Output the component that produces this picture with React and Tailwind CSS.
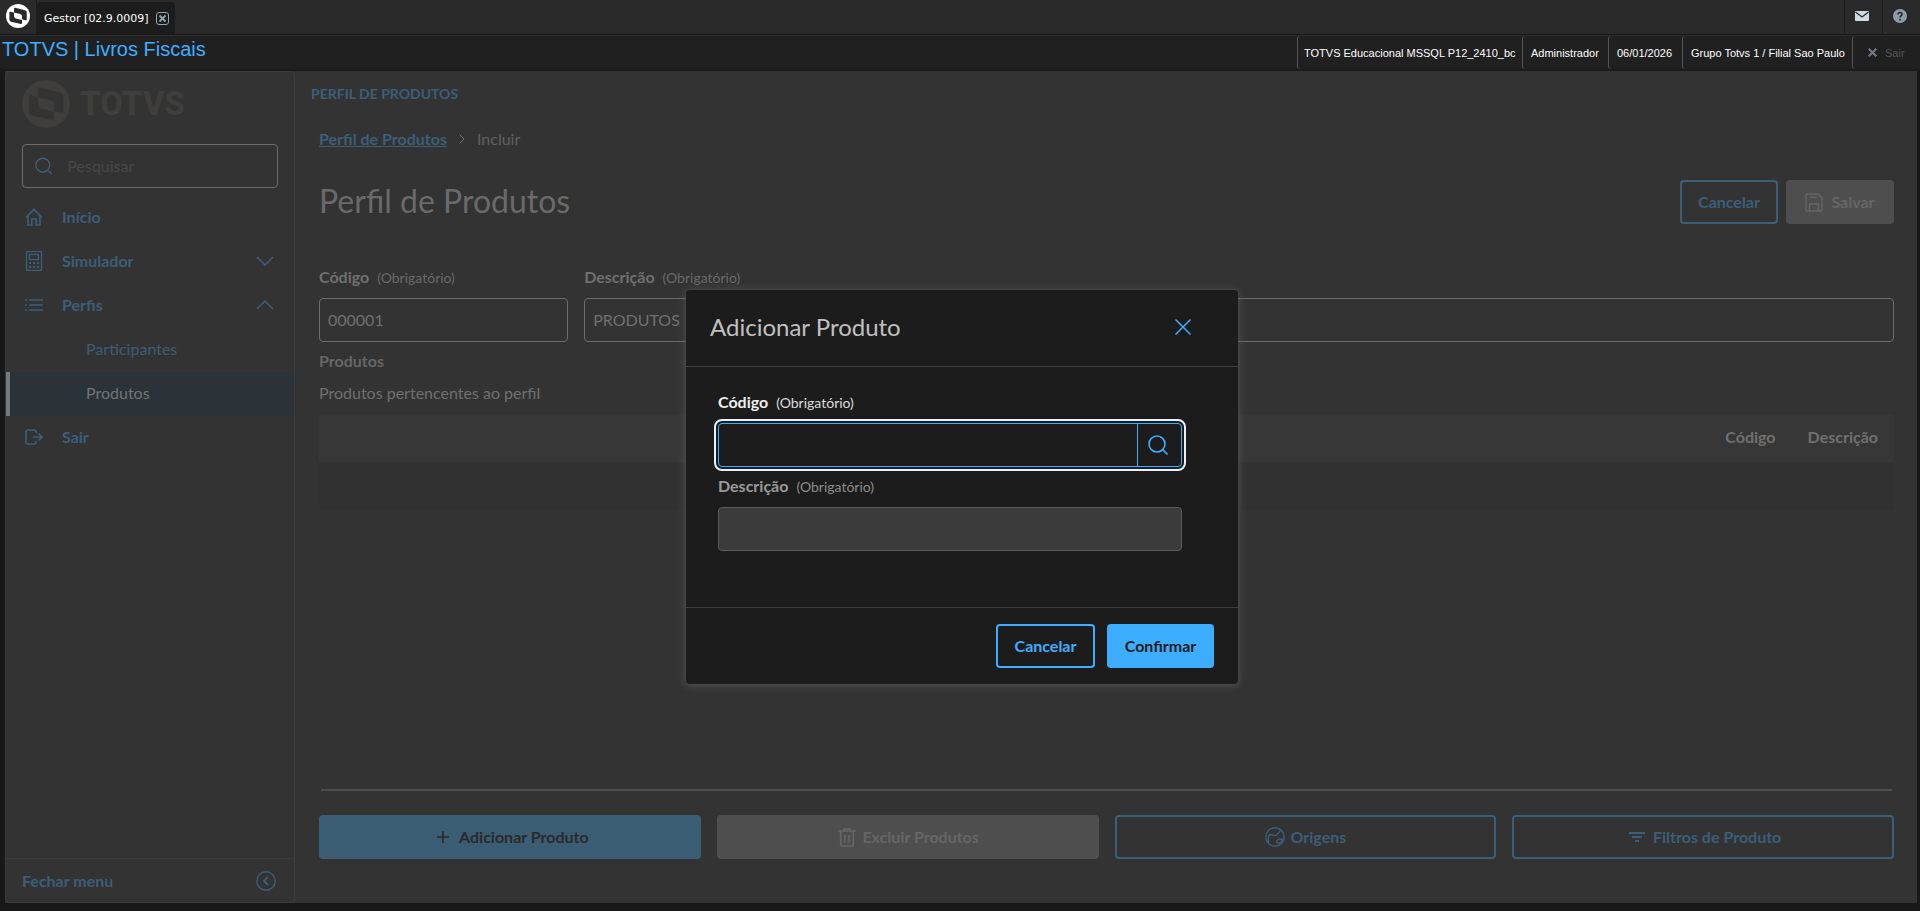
const sideItems = [
  { label: "Início", icon: HomeIcon },
  { label: "Simulador", icon: CalculatorIcon, chevron: "down" },
  { label: "Perfis", icon: ListIcon, chevron: "up" },
  { label: "Participantes", sub: true },
  { label: "Produtos", sub: true, active: true },
  { label: "Sair", icon: ExitIcon },
];

const sessionInfo = [
  { text: "TOTVS Educacional MSSQL P12_2410_bc", width: "w-[225px] pl-[6px]" },
  { text: "Administrador", width: "w-[86px] pl-[8px]" },
  { text: "06/01/2026", width: "w-[74px] pl-[8px]" },
  { text: "Grupo Totvs 1 / Filial Sao Paulo", width: "w-[170px] pl-[8px]" },
];

// two overlapping sheets cut out of a disc, the overlap stays filled
function TotvsMark({ className, hole }) {
  return (
    <svg viewBox="0 0 48 48" className={className} aria-hidden="true">
      <circle cx="24" cy="24" r="24" fill="currentColor" />
      <path d="M18 7.700 L38 12.500 Q41.500 13.500 41.500 17 V31 Q41.500 33 39.500 32.700 L16 27 V9.500 Q16 7.500 18 7.700Z" fill={hole} />
      <path d="M9 15.300 L32 21 V38.500 Q32 40.500 30 40 L10 35.500 Q6.800 34.500 6.800 31 V17 Q6.800 15 9 15.300Z" fill={hole} />
      <path d="M16 17.100 L28.500 20.200 Q32 21.200 32 24.500 V32 L19.500 28.800 Q16 27.800 16 24.500Z" fill="currentColor" />
    </svg>
  );
}

function HomeIcon() {
  return (
    <svg viewBox="0 0 18 18" className="size-[18px]" fill="none" stroke="currentColor" strokeWidth="1.7">
      <path d="M1 9.500 L9 1.300 L17 9.500 M3 8 V17 H6.800 V11 H11.200 V17 H15 V8" />
    </svg>
  );
}

function CalculatorIcon() {
  return (
    <svg viewBox="0 0 18 20" className="h-5 w-[18px]" fill="none" stroke="currentColor">
      <rect x="1.500" y="0.500" width="15" height="19" rx="0.500" strokeWidth="1.300" />
      <rect x="4.500" y="3.500" width="9" height="5" strokeWidth="1.300" />
      <path strokeWidth="2" strokeDasharray="2 2" d="M4 12 H14 M4 16 H14" />
    </svg>
  );
}

function ListIcon() {
  return (
    <svg viewBox="0 0 18 14" className="h-[14px] w-[18px]" fill="none" stroke="currentColor" strokeWidth="1.600">
      <path d="M0 2 H2 M4 2 H18 M0 7 H2 M4 7 H18 M0 12 H2 M4 12 H18" />
    </svg>
  );
}

function ExitIcon() {
  return (
    <svg viewBox="0 0 18 16" className="h-4 w-[18px]" fill="none" stroke="currentColor" strokeWidth="1.600">
      <path d="M11 4 V3 Q11 1 9 1 H3 Q1 1 1 3 V13 Q1 15 3 15 H9 Q11 15 11 13 V12 M8 8 H17 M13.500 4.500 L17 8 L13.500 11.500" />
    </svg>
  );
}

function Chevron({ up }) {
  return (
    <svg viewBox="0 0 18 10" className="h-[10px] w-[18px]" fill="none" stroke="currentColor" strokeWidth="1.500">
      <path d={up ? "M1 9 L9 1 L17 9" : "M1 1 L9 9 L17 1"} />
    </svg>
  );
}

function SearchIcon() {
  return (
    <svg viewBox="0 0 20 20" className="size-5" fill="none" stroke="currentColor" strokeWidth="1.600">
      <circle cx="9" cy="9" r="8" />
      <path d="M14.500 14.500 L19.500 19.500" />
    </svg>
  );
}

function SaveIcon() {
  return (
    <svg viewBox="0 0 18 19" className="h-[19px] w-[18px]" fill="none" stroke="currentColor" strokeWidth="1.300">
      <path d="M2 1 H13 L17 5 V17 Q17 18 16 18 H2 Q1 18 1 17 V2 Q1 1 2 1Z M4.500 18 V11 H13.500 V18 M5 4.500 H12" />
    </svg>
  );
}

function TrashIcon() {
  return (
    <svg viewBox="0 0 18 19" className="h-[19px] w-[18px]" fill="none" stroke="currentColor" strokeWidth="1.700">
      <path d="M0 3 H18 M6 2.500 V1 H12 V2.500 M2.700 3 V16.500 Q2.700 18 4.200 18 H13.800 Q15.300 18 15.300 16.500 V3 M7 7 V14.500 M11 7 V14.500" />
    </svg>
  );
}

function GlobeIcon() {
  return (
    <svg viewBox="0 0 20 20" className="size-5" fill="none" stroke="currentColor" strokeWidth="1.400">
      <circle cx="10" cy="10" r="9.200" />
      <path d="M3.500 16.500 L3.500 10.500 Q3.500 7.500 6 7.500 Q7.500 7.700 9 8.500 Q10.500 9 12 7.500 Q14 6 15.500 3.300 M19 13 L17.500 12.500 Q16 11.500 15 12.500 Q12 12 11.700 14.500 Q12 16.500 14.500 16 Q16.500 16 17 13" />
    </svg>
  );
}

function FilterIcon() {
  return (
    <svg viewBox="0 0 16 10" className="h-[10px] w-4" fill="none" stroke="currentColor" strokeWidth="1.800">
      <path d="M0 1 H16 M3 5 H13 M6 9 H10" />
    </svg>
  );
}

function TopBar() {
  return (
    <header>
      <div className="flex h-[35px] justify-between border-b border-[#1a1a1a] bg-[#2a2a2a]">
        <div className="flex items-stretch">
          <div className="flex w-[37px] items-center justify-center border-r border-[#1e1e1e] pb-[3px]">
            <TotvsMark className="size-6 text-white" hole="#2a2a2a" />
          </div>
          <div className="mt-[2px] flex w-[138px] items-center rounded-t-[4px] bg-[#1c1c1c] pl-[7px] text-white">
            <span className="w-[112px] whitespace-nowrap pt-[2px] font-['DejaVu_Sans','Noto_Sans',sans-serif] text-[11px]">
              Gestor [02.9.0009]
            </span>
            <button aria-label="Fechar aba" className="text-[#93a4b1]">
              <svg viewBox="0 0 13 13" className="size-[13px]" fill="none" stroke="currentColor">
                <rect x="0.500" y="0.500" width="12" height="12" rx="2.500" />
                <path strokeWidth="1.800" d="M3.500 3.500 L9.500 9.500 M9.500 3.500 L3.500 9.500" />
              </svg>
            </button>
          </div>
        </div>
        <div className="flex">
          <button aria-label="Mensagens" className="flex w-[38px] items-center justify-center border-l border-[#1c1c1c] pr-1 pb-[2px]">
            <svg viewBox="0 0 14 10" className="h-[10px] w-[14px]">
              <rect width="14" height="10" rx="1" fill="#cfdbe2" />
              <path d="M0.500 1 L7 6 L13.500 1" fill="none" stroke="#2a2a2a" strokeWidth="1.300" />
            </svg>
          </button>
          <button aria-label="Ajuda" className="flex w-[38px] items-center justify-center border-l border-[#1c1c1c] pr-1 pb-[2px]">
            <svg viewBox="0 0 14 14" className="size-[14px]" fill="none">
              <circle cx="7" cy="7" r="7" fill="#8b9caa" />
              <path d="M5 5.500 Q5 3.500 7 3.500 Q9 3.500 9 5.300 Q9 6.300 7.800 7 Q7 7.500 7 8.500 M7 9.800 V11.400" stroke="#2a2a2a" strokeWidth="1.600" />
            </svg>
          </button>
        </div>
      </div>
      <div className="flex h-[36px] justify-between border-t border-[#2c2c2c] border-b-2 border-b-[#1a1a1a] bg-[#202020] font-['Liberation_Sans',Arial,sans-serif]">
        <h1 className="pl-[2px] text-[20px] leading-[26px] text-[#3daeff]">TOTVS | Livros Fiscais</h1>
        <div className="flex text-[11px] text-white">
          {sessionInfo.map((info) => (
            <div key={info.text} className={`flex items-center overflow-hidden whitespace-nowrap rounded-l-[3px] border-l border-[#555] ${info.width}`}>
              {info.text}
            </div>
          ))}
          <button className="flex w-[68px] items-center gap-2 rounded-l-[3px] border-l border-[#555] pl-[15px] text-[#55565a]">
            <svg viewBox="0 0 9 9" className="size-[9px]" stroke="#747985" strokeWidth="2">
              <path d="M0.700 0.700 L8.300 8.300 M8.300 0.700 L0.700 8.300" />
            </svg>
            Sair
          </button>
        </div>
      </div>
    </header>
  );
}

function Sidebar() {
  return (
    <aside className="flex w-[290px] shrink-0 flex-col rounded-[4px] border border-[#3c3c3c] text-[#3b5e79]">
      <div className="flex h-[64px] items-center gap-[10px] pl-4 text-[#3f3e3c]">
        <TotvsMark className="size-12" hole="#333333" />
        <span className="font-[Roboto,'Liberation_Sans',sans-serif] text-[33px] font-extrabold">TOTVS</span>
      </div>
      <label className="mx-4 mt-2 flex h-11 items-center gap-[15px] rounded-[4px] border border-[#6c6c6c] pl-3">
        <SearchIcon />
        <input
          type="text"
          aria-label="Pesquisar"
          placeholder="Pesquisar"
          className="w-full bg-transparent text-[16px] outline-none placeholder:text-[#474747]"
        />
      </label>
      <nav className="mt-2 flex flex-1 flex-col">
        {sideItems.map(({ label, icon: Icon, chevron, sub, active }) => (
          <a
            key={label}
            href="#"
            className={`flex h-11 items-center pr-5 pb-[2px] ${
              active ? "border-l-4 border-[#74797d] bg-[#2b3238] pl-[76px] text-[#747474]" : sub ? "pl-20" : "pl-[19px] font-bold"
            }`}
          >
            {Icon && (
              <span className="w-[37px]">
                <Icon />
              </span>
            )}
            <span className="flex-1">{label}</span>
            {chevron && <Chevron up={chevron === "up"} />}
          </a>
        ))}
      </nav>
      <button className="flex h-11 items-center justify-between border-t border-[#3c3c3c] pl-4 pr-[18px] font-bold">
        Fechar menu
        <svg viewBox="0 0 20 20" className="size-5" fill="none" stroke="currentColor" strokeWidth="1.400">
          <circle cx="10" cy="10" r="9.200" />
          <path strokeWidth="1.800" d="M12 6 L8 10 L12 14" />
        </svg>
      </button>
    </aside>
  );
}

function ProfilePage() {
  return (
    <main className="flex min-w-0 flex-1 flex-col text-[#707070]">
      <div className="flex h-[46px] items-center pl-4 text-[14px] font-bold text-[#3b5e79]">PERFIL DE PRODUTOS</div>
      <div className="flex flex-1 flex-col pl-6 pr-[23px] pb-11">
        <div className="flex h-11 items-center gap-3">
          <a href="#" className="font-bold text-[#3b5e79] underline">
            Perfil de Produtos
          </a>
          <svg viewBox="0 0 6 10" className="h-[10px] w-[6px]" fill="none" stroke="currentColor">
            <path d="M0.500 0.500 L5 5 L0.500 9.500" />
          </svg>
          <span className="text-[#606060]">Incluir</span>
        </div>

        <div className="mt-[19px] flex h-11 items-center justify-between">
          <h2 className="pb-[2px] text-[32px] leading-[40px] text-[#6a6a6a]">Perfil de Produtos</h2>
          <div className="flex gap-2">
            <button className="h-11 w-[98px] rounded-[4px] border-2 border-[#3b5e79] font-bold text-[#3b5e79]">Cancelar</button>
            <button className="flex h-11 w-[108px] items-center justify-center gap-2 rounded-[4px] bg-[#4e4e4e] font-bold text-[#666]" disabled>
              <SaveIcon />
              Salvar
            </button>
          </div>
        </div>

        <div className="mt-[42px] grid grid-cols-12 gap-4">
          <div className="col-span-2">
            <FieldLabel htmlFor="perfil-codigo">Código</FieldLabel>
            <input id="perfil-codigo" defaultValue="000001" className="mt-2 block h-11 w-full rounded-[4px] border border-[#6c6c6c] px-2 pb-[2px]" />
          </div>
          <div className="col-span-10">
            <FieldLabel htmlFor="perfil-descricao">Descrição</FieldLabel>
            <input id="perfil-descricao" defaultValue="PRODUTOS" className="mt-2 block h-11 w-full rounded-[4px] border border-[#6c6c6c] px-2 pb-[2px]" />
          </div>
        </div>

        <h3 className="leading-[38px] font-bold text-[#666]">Produtos</h3>
        <p className="leading-[26px]">Produtos pertencentes ao perfil</p>

        <table className="mt-2 w-full">
          <thead>
            <tr className="h-12 bg-[#373737]">
              <th className="w-full" />
              <th className="px-4 pb-[2px] font-bold">Código</th>
              <th className="px-4 pb-[2px] font-bold">Descrição</th>
            </tr>
          </thead>
          <tbody>
            <tr className="h-12 bg-[#313131]">
              <td colSpan={3} />
            </tr>
          </tbody>
        </table>

        <hr className="mx-[2px] mt-auto border-t-2 border-[#4e4e4e]" />
        <div className="mt-6 grid grid-cols-4 gap-4 font-bold">
          <button className="flex h-11 items-center justify-center gap-[10px] rounded-[4px] bg-[#3b5d73] pl-[6px] text-[#2a2a2a]">
            <svg viewBox="0 0 12 12" className="size-3" stroke="currentColor" strokeWidth="1.600">
              <path d="M0 6 H12 M6 0 V12" />
            </svg>
            Adicionar Produto
          </button>
          <button className="flex h-11 items-center justify-center gap-[6px] rounded-[4px] bg-[#4e4e4e] pl-[2px] text-[#666]" disabled>
            <TrashIcon />
            Excluir Produtos
          </button>
          <button className="flex h-11 items-center justify-center gap-[6px] rounded-[4px] border-2 border-[#3b5e79] text-[#3b5e79]">
            <GlobeIcon />
            Origens
          </button>
          <button className="flex h-11 items-center justify-center gap-2 rounded-[4px] border-2 border-[#3b5e79] pl-1 text-[#3b5e79]">
            <FilterIcon />
            Filtros de Produto
          </button>
        </div>
      </div>
    </main>
  );
}

function FieldLabel({ htmlFor, className = "", children }) {
  return (
    <label htmlFor={htmlFor} className={`flex h-6 items-baseline gap-2 leading-[22px] ${className}`}>
      <span className="font-bold">{children}</span>
      <span className="text-[14px] opacity-90">(Obrigatório)</span>
    </label>
  );
}

function AddProductModal() {
  return (
    <div className="absolute inset-0 flex items-center justify-center pl-[2px]">
      <div role="dialog" aria-label="Adicionar Produto" className="w-[552px] rounded-[4px] bg-[#1c1c1c] shadow-[0_1px_8px_#5a5a5a]">
        <div className="flex h-[77px] items-center justify-between border-b border-[#3e3e3e] pr-[47px] pb-[2px] pl-6">
          <h2 className="text-[24px] text-[#c0c0c0]">Adicionar Produto</h2>
          <button aria-label="Fechar" className="text-[#3daeff]">
            <svg viewBox="0 0 16 16" className="size-4" stroke="currentColor" strokeWidth="1.500">
              <path d="M0.500 0.500 L15.500 15.500 M15.500 0.500 L0.500 15.500" />
            </svg>
          </button>
        </div>
        <div className="pt-6 pr-14 pb-14 pl-8">
          <FieldLabel htmlFor="produto-codigo" className="text-[#eee]">
            Código
          </FieldLabel>
          <div className="mt-2 flex h-11 rounded-[4px] border border-[#3daeff] outline-2 outline-offset-2 outline-[#e6f2fb]">
            <input id="produto-codigo" className="min-w-0 flex-1 bg-transparent px-2 text-white outline-none" />
            <button aria-label="Buscar" className="flex w-11 items-center justify-center border-l border-[#3daeff] pr-[3px] text-[#3daeff]">
              <SearchIcon />
            </button>
          </div>
          <FieldLabel htmlFor="produto-descricao" className="mt-2 text-[#9a9a9a]">
            Descrição
          </FieldLabel>
          <input id="produto-descricao" disabled className="mt-2 block h-11 w-full rounded-[4px] border border-[#5a5a5a] bg-[#3b3b3b] px-2" />
        </div>
        <div className="flex h-[77px] items-center justify-end gap-3 border-t border-[#3e3e3e] pr-6 font-bold">
          <button className="h-11 w-[99px] rounded-[4px] border-2 border-[#3daeff] text-[#3daeff]">Cancelar</button>
          <button className="h-11 w-[107px] rounded-[4px] bg-[#3daeff] text-[#1c1c1c]">Confirmar</button>
        </div>
      </div>
    </div>
  );
}

export default function App() {
  return (
    <div className="flex min-h-screen flex-col bg-[#181818] font-[Lato,'Noto_Sans',sans-serif] text-[16px] leading-6">
      <TopBar />
      <div className="relative mr-[3px] mb-2 ml-[5px] flex flex-1 bg-[#333333]">
        <Sidebar />
        <ProfilePage />
        <AddProductModal />
      </div>
    </div>
  );
}
